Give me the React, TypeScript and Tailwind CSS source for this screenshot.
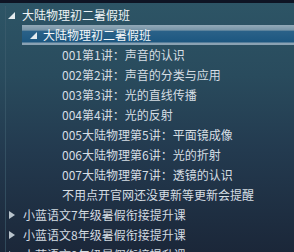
import React from "react";

const lessons = [
  "001第1讲：声音的认识",
  "002第2讲：声音的分类与应用",
  "003第3讲：光的直线传播",
  "004第4讲：光的反射",
  "005大陆物理第5讲：平面镜成像",
  "006大陆物理第6讲：光的折射",
  "007大陆物理第7讲：透镜的认识",
  "不用点开官网还没更新等更新会提醒",
];

const others = [
  "小蓝语文7年级暑假衔接提升课",
  "小蓝语文8年级暑假衔接提升课",
  "小蓝语文9年级暑假衔接提升课",
];

function Open() {
  return (
    <svg width="7" height="7" viewBox="0 0 7 7" className="shrink-0">
      <path d="M7 0 L7 7 L0 7 Z" fill="#e4ebef" />
    </svg>
  );
}

function Closed() {
  return (
    <svg width="6" height="8" viewBox="0 0 6 8" className="shrink-0">
      <path d="M0 0 L6 4 L0 8 Z" fill="#b9c4cc" />
    </svg>
  );
}

export default function App() {
  return (
    <div
      className="relative h-[252px] w-[294px] overflow-hidden bg-[linear-gradient(to_bottom,#2d5566_0%,#294b5d_30%,#233a4f_60%,#1b2739_100%)] text-[12px] leading-none"
      style={{ fontFamily: '"Noto Sans CJK SC", "Noto Sans", sans-serif' }}
    >
      <div className="h-[3px] bg-[#0e1424]" />
      <div className="absolute left-[5px] top-[6px] h-full w-px bg-[#3f5f70]/60" />
      <div className="flex flex-col pt-[2px]">
        <div className="flex h-[20px] items-center gap-[7px] pl-[8px] text-[#eef3f6]">
          <Open />
          <span>大陆物理初二暑假班</span>
        </div>
        <div className="ml-[22px] flex h-[20px] items-center gap-[6px] bg-[linear-gradient(to_bottom,#93a9b8_0%,#7895a7_25%,#2a6188_32%,#1d5780_85%,#8aa2b3_90%,#8aa2b3_100%)] pl-[8px] text-[#f4f7f9]">
          <Open />
          <span>大陆物理初二暑假班</span>
        </div>
        {lessons.map((t) => (
          <div key={t} className="flex h-[20px] items-center pl-[62px] text-[#d6dee4]">
            {t}
          </div>
        ))}
        {others.map((t) => (
          <div key={t} className="flex h-[20px] items-center gap-[8px] pl-[9px] text-[#d3dbe1]">
            <Closed />
            <span>{t}</span>
          </div>
        ))}
      </div>
    </div>
  );
}
